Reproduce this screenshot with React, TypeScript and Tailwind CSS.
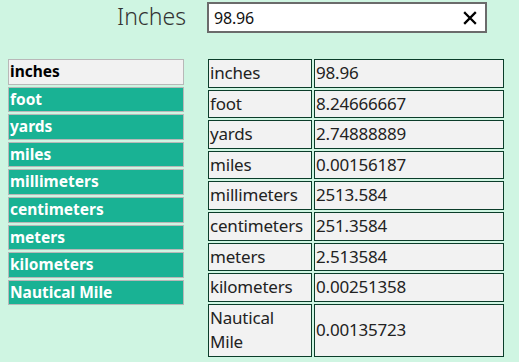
import React from "react";

const units: [string, string][] = [
  ["inches", "98.96"],
  ["foot", "8.24666667"],
  ["yards", "2.74888889"],
  ["miles", "0.00156187"],
  ["millimeters", "2513.584"],
  ["centimeters", "251.3584"],
  ["meters", "2.513584"],
  ["kilometers", "0.00251358"],
  ["Nautical Mile", "0.00135723"],
];

export default function App() {
  return (
    <div
      className="w-[519px] h-[362px] bg-[#cff5e2] overflow-hidden text-[#222]"
      style={{ fontFamily: '"Noto Sans", "Open Sans", sans-serif' }}
    >
      <div className="flex items-start pt-[2px]">
        <div className="w-[186px] text-right text-[23px] font-light leading-[28px] text-[#333]">
          Inches
        </div>
        <div className="ml-[21px] w-[280px] h-[31px] border-2 border-[#6b6b6b] bg-white flex items-center pl-[5px] pr-[8px]">
          <span className="flex-1 text-[16px] tracking-[-0.2px] text-[#111]">98.96</span>
          <svg width="14" height="14" viewBox="0 0 14 14" className="shrink-0">
            <path d="M2 2 L12 12 M12 2 L2 12" stroke="#000" strokeWidth="2.3" strokeLinecap="square" />
          </svg>
        </div>
      </div>
      <div className="flex items-start mt-[24px]">
        <div className="ml-[8px] w-[176px] mt-[2px] flex flex-col gap-[2px]">
          {units.map(([name], i) => (
            <div
              key={name}
              className={
                i === 0
                  ? "h-[25.6px] border border-[#b8b8b8] bg-[#f2f2f2] text-black font-bold text-[15.5px] leading-[23px] pl-px"
                  : "h-[25.6px] border border-[#b8b8b8] bg-[#19b294] text-white font-bold text-[15.5px] leading-[23px] pl-px"
              }
            >
              {name}
            </div>
          ))}
        </div>
        <table className="ml-[22px] w-[300px] table-fixed border-separate border-spacing-[2px] text-[17px] tracking-[-0.2px] leading-[24.6px] text-[#222]">
          <colgroup>
            <col className="w-[104px]" />
            <col />
          </colgroup>
          <tbody>
            {units.map(([name, val]) => (
              <tr key={name}>
                <td className="border border-[#0b3d2a] bg-[#f2f2f2] p-px align-middle">{name}</td>
                <td className="border border-[#0b3d2a] bg-[#f2f2f2] p-px align-middle">{val}</td>
              </tr>
            ))}
          </tbody>
        </table>
      </div>
    </div>
  );
}
